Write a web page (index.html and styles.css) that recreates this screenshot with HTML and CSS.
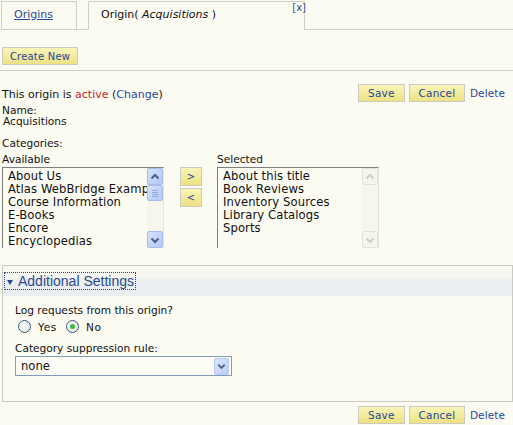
FILE: index.html
```html
<!DOCTYPE html>
<html>
<head>
<meta charset="utf-8">
<link rel="stylesheet" href="styles.css">
</head>
<body>
<div class="tabs">
  <div class="tab"><a href="#" class="tab-link">Origins</a></div>
  <div class="tab-gap"></div>
  <div class="tab tab-active">Origin( <i>Acquisitions</i> )<a href="#" class="close">[x]</a></div>
  <div class="tab-fill"></div>
</div>

<div class="create-row"><button class="btn btn-create">Create New</button></div>
<div class="rule"></div>

<div class="page">
  <div class="status-row">
    <div class="status">This origin is <span class="active">active</span> (<a href="#" class="link">Change</a>)</div>
    <button class="btn btn-save">Save</button>
    <button class="btn btn-cancel">Cancel</button>
    <a href="#" class="link delete">Delete</a>
  </div>

  <div class="label label-name">Name:</div>
  <div class="value">Acquisitions</div>
  <div class="label label-cat">Categories:</div>

  <div class="lists">
    <div class="col">
      <div class="label">Available</div>
      <div class="listbox">
        <div class="items">
          <div class="item">About Us</div>
          <div class="item">Atlas WebBridge Example</div>
          <div class="item">Course Information</div>
          <div class="item">E-Books</div>
          <div class="item">Encore</div>
          <div class="item">Encyclopedias</div>
        </div>
        <div class="sbar">
          <div class="sbtn"><svg width="14" height="14" viewBox="0 0 14 14"><path d="M3.5 8.5 L7 5 L10.5 8.5" fill="none" stroke="#4d6185" stroke-width="2"/></svg></div>
          <div class="thumb"><svg width="8" height="8" viewBox="0 0 8 8"><path d="M1 1.5H7M1 3.5H7M1 5.5H7M1 7.5H7" stroke="#8fa7de" stroke-width="1"/></svg></div>
          <div class="track"></div>
          <div class="sbtn"><svg width="14" height="14" viewBox="0 0 14 14"><path d="M3.5 5.5 L7 9 L10.5 5.5" fill="none" stroke="#4d6185" stroke-width="2"/></svg></div>
        </div>
      </div>
    </div>
    <div class="movers">
      <button class="btn btn-move">&gt;</button>
      <button class="btn btn-move">&lt;</button>
    </div>
    <div class="col">
      <div class="label">Selected</div>
      <div class="listbox">
        <div class="items">
          <div class="item">About this title</div>
          <div class="item">Book Reviews</div>
          <div class="item">Inventory Sources</div>
          <div class="item">Library Catalogs</div>
          <div class="item">Sports</div>
        </div>
        <div class="sbar sbar-off">
          <div class="sbtn"><svg width="14" height="14" viewBox="0 0 14 14"><path d="M3.5 8.5 L7 5 L10.5 8.5" fill="none" stroke="#cfcfc8" stroke-width="2"/></svg></div>
          <div class="track"></div>
          <div class="sbtn"><svg width="14" height="14" viewBox="0 0 14 14"><path d="M3.5 5.5 L7 9 L10.5 5.5" fill="none" stroke="#cfcfc8" stroke-width="2"/></svg></div>
        </div>
      </div>
    </div>
  </div>

  <div class="settings">
    <div class="settings-head">
      <a href="#" class="toggle"><svg class="tri" width="6" height="5" viewBox="0 0 6 5"><path d="M0 0H6L3 5Z" fill="#2b4a8a"/></svg>Additional Settings</a>
    </div>
    <div class="settings-body">
      <div class="label">Log requests from this origin?</div>
      <div class="radios">
        <span class="radio"></span><span class="rlabel">Yes</span>
        <span class="radio radio-on"><span class="dot"></span></span><span class="rlabel">No</span>
      </div>
      <div class="label label-rule">Category suppression rule:</div>
      <div class="select">
        <span class="select-text">none</span>
        <span class="select-btn"><svg width="14" height="14" viewBox="0 0 14 14"><path d="M3.5 5.5 L7 9 L10.5 5.5" fill="none" stroke="#4d6185" stroke-width="2"/></svg></span>
      </div>
    </div>
  </div>

  <div class="footer">
    <button class="btn btn-save">Save</button>
    <button class="btn btn-cancel">Cancel</button>
    <a href="#" class="link delete">Delete</a>
  </div>
</div>
</body>
</html>
```

FILE: styles.css
```css
html, body {
  margin: 0;
  padding: 0;
  background: #fcfbf1;
  font-family: "DejaVu Sans", Verdana, sans-serif;
  color: #111;
  font-size: 11px;
}

.tabs {
  display: flex;
  padding-top: 1px;
  height: 29px;
}
.tab {
  box-sizing: border-box;
  height: 29px;
  border: 1px solid #cfcfc8;
  line-height: 26px;
  font-size: 11px;
}
.tab:first-child {
  margin-left: 1px;
  width: 76px;
  padding-left: 12px;
}
.tab-link {
  color: #26479a;
  text-decoration: underline;
}
.tab-gap {
  width: 11px;
  border-bottom: 1px solid #cfcfc8;
}
.tab-active {
  position: relative;
  width: 217px;
  border-bottom: none;
  padding-left: 12px;
  color: #111;
}
.close {
  position: absolute;
  top: 0;
  right: -3px;
  font-size: 10px;
  line-height: 12px;
  color: #2b4a8a;
  text-decoration: none;
  background: #fcfbf1;
  padding: 0 1px;
}
.tab-fill {
  flex: 1;
  border-bottom: 1px solid #cfcfc8;
}

.create-row {
  margin-top: 17px;
  padding-left: 2px;
  height: 18px;
}
.rule {
  margin-top: 5px;
  border-top: 1px solid #cfcfc8;
}

.btn {
  box-sizing: border-box;
  height: 18px;
  margin: 0;
  padding: 0;
  border: 1px solid #cbcbc2;
  background: linear-gradient(#faf5b8, #ede183);
  color: #27469a;
  font-family: "DejaVu Sans", Verdana, sans-serif;
  font-size: 10.5px;
  letter-spacing: 0.2px;
  line-height: 15px;
  cursor: pointer;
}
.btn-create {
  width: 76px;
  font-size: 10px;
}
.btn-save { width: 47px; }
.btn-cancel { width: 56px; margin-left: 4px; }

.link {
  color: #26479a;
  text-decoration: none;
}
.delete {
  margin-left: 5px;
  font-size: 10.5px;
  letter-spacing: 0.1px;
}

.page {
  padding-left: 2px;
}

.status-row {
  display: flex;
  align-items: center;
  margin-top: 13px;
  height: 18px;
  padding-right: 8px;
}
.status {
  flex: 1;
  font-size: 11px;
  padding-top: 2px;
}
.active { color: #c4242a; }

.label {
  font-size: 10.6px;
  line-height: 11px;
}
.label-name { margin-top: 3px; }
.value {
  font-size: 10.6px;
  line-height: 11px;
  padding-left: 1px;
}
.label-cat { margin-top: 11px; }

.lists {
  display: flex;
  align-items: flex-start;
  margin-top: 5px;
}
.col .label {
  margin-bottom: 2px;
}
.listbox {
  box-sizing: border-box;
  width: 162px;
  height: 81px;
  display: flex;
  border-top: 1px solid #7f7f7f;
  border-left: 1px solid #7f7f7f;
  border-right: 1px solid #e4e4dc;
  background: #fcfbf1;
}
.items {
  flex: 1;
  overflow: hidden;
  padding: 2px 0 0 5px;
  white-space: nowrap;
}
.item {
  font-size: 11.6px;
  line-height: 13px;
  letter-spacing: 0.1px;
}
.sbar {
  width: 16px;
  display: flex;
  flex-direction: column;
  background: #f6f6ef;
}
.sbtn, .thumb {
  box-sizing: border-box;
  width: 16px;
  height: 17px;
  border: 1px solid #a9bdec;
  border-radius: 2px;
  background: linear-gradient(135deg, #d6e2fc, #b3c6f4);
  display: flex;
  align-items: center;
  justify-content: center;
}
.thumb {
  height: 16px;
}
.track { flex: 1; }
.sbar-off .sbtn {
  border-color: #e2e2da;
  background: #f5f5ee;
}

.movers {
  display: flex;
  flex-direction: column;
  gap: 2px;
  margin-left: 16px;
  margin-top: 13px;
}
.btn-move {
  width: 22px;
  height: 19px;
  font-size: 10px;
  line-height: 16px;
}
.movers + .col {
  margin-left: 15px;
}

.settings {
  margin-top: 17px;
  border: 1px solid #cbcbc4;
}
.settings-head {
  height: 30px;
  background: linear-gradient(#f9f9f3 0%, #f7f7f1 35%, #eaeef0 50%, #eaeef0 100%);
  padding: 7px 0 0 2px;
  box-sizing: border-box;
}
.toggle {
  display: inline-flex;
  align-items: center;
  height: 16px;
  padding: 0 1px 0 2px;
  outline: 1px dotted #2b4a8a;
  font-family: "Liberation Sans", Arial, sans-serif;
  font-size: 14px;
  color: #2b4a8a;
  text-decoration: none;
}
.tri {
  margin-right: 5px;
  margin-top: 2px;
}
.settings-body {
  padding: 9px 0 25px 12px;
}
.radios {
  display: flex;
  align-items: center;
  height: 15px;
  margin-top: 3px;
  padding-left: 3px;
}
.radio {
  box-sizing: border-box;
  width: 13px;
  height: 13px;
  border-radius: 50%;
  border: 1px solid #2f5a84;
  background: radial-gradient(circle at 40% 40%, #ffffff, #e2e2da);
  display: flex;
  align-items: center;
  justify-content: center;
}
.dot {
  width: 5px;
  height: 5px;
  border-radius: 50%;
  background: #3bb93b;
}
.rlabel {
  font-size: 10.6px;
  letter-spacing: 0.6px;
  margin-left: 7px;
  margin-right: 9px;
}
.label-rule { margin-top: 9px; }
.select {
  box-sizing: border-box;
  width: 217px;
  height: 20px;
  margin-top: 2px;
  border: 1px solid #7f9db9;
  background: #fdfcf4;
  display: flex;
  align-items: center;
  justify-content: space-between;
  padding: 0 2px 0 5px;
}
.select-text {
  font-size: 11.6px;
}
.select-btn {
  box-sizing: border-box;
  width: 15px;
  height: 17px;
  border: 1px solid #b5c6ef;
  border-radius: 2px;
  background: linear-gradient(135deg, #dce6fd, #bccdf6);
  display: flex;
  align-items: center;
  justify-content: center;
}

.footer {
  display: flex;
  align-items: center;
  justify-content: flex-end;
  margin-top: 4px;
  padding-right: 8px;
}
```
